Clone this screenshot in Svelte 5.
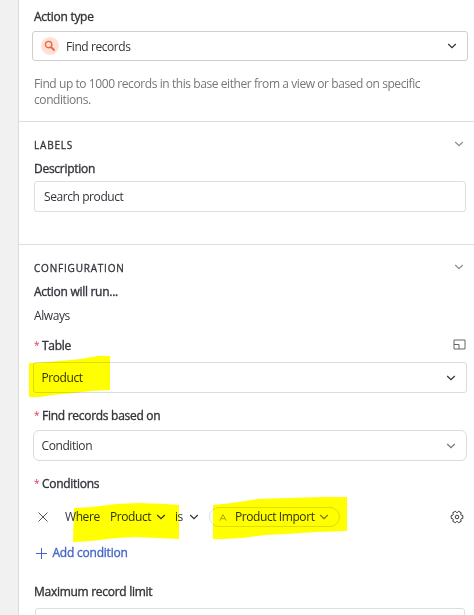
<script lang="ts">
	let actionType = $state('Find records');
	let description = $state('Search product');
	let table = $state('Product');
	let basedOn = $state('Condition');

	// outline of a six-toothed cog centred on 7,7
	const cog = Array.from({ length: 6 }, (_, i) => i * 60)
		.flatMap((a) => [
			[a - 24, 4.5],
			[a - 15, 6],
			[a + 15, 6],
			[a + 24, 4.5]
		])
		.map(([deg, r]) => {
			const rad = (deg * Math.PI) / 180;
			return `${(7 + r * Math.cos(rad)).toFixed(2)},${(7 + r * Math.sin(rad)).toFixed(2)}`;
		})
		.join(' ');
</script>

{#snippet chevron(tone: string)}
	<svg class="chevron {tone}" width="10" height="6" viewBox="0 0 10 6" aria-hidden="true">
		<path d="M1.2 1 5 4.6 8.8 1" />
	</svg>
{/snippet}

<div class="page">
	<aside class="gutter"></aside>
	<main class="panel">
		<section class="action">
			<h3 class="label">Action type</h3>
			<button class="select select-action">
				<span class="badge">
					<svg width="12" height="12" viewBox="0 0 12 12" aria-hidden="true">
						<circle cx="4.6" cy="4.6" r="3.2" />
						<path d="m7 7 3.5 3.5" />
					</svg>
				</span>
				<span class="value">{actionType}</span>
				{@render chevron('dark')}
			</button>
			<p class="help">
				Find up to 1000 records in this base either from a view or based on specific<br />
				conditions.
			</p>
		</section>

		<section class="labels">
			<header class="heading">
				<h2>LABELS</h2>
				{@render chevron('muted')}
			</header>
			<h3 class="label description-label">Description</h3>
			<div class="input"><span>{description}</span></div>
		</section>

		<section class="config">
			<header class="heading">
				<h2>CONFIGURATION</h2>
				{@render chevron('muted')}
			</header>
			<h3 class="label run-label">Action will run...</h3>
			<p class="always">Always</p>

			<div class="field-label table-label">
				<span class="star">*</span>
				<h3 class="label">Table</h3>
				<svg class="expand" width="13" height="11" viewBox="0 0 13 11" aria-hidden="true">
					<path d="M1 1h11v9H1zM1 5.5h5V10" />
				</svg>
			</div>
			<button class="select table-select">
				<span class="value">{table}</span>
				{@render chevron('dark')}
			</button>

			<div class="field-label based-label">
				<span class="star">*</span>
				<h3 class="label">Find records based on</h3>
			</div>
			<button class="select based-select">
				<span class="value">{basedOn}</span>
				{@render chevron('grey')}
			</button>

			<div class="field-label conditions-label">
				<span class="star">*</span>
				<h3 class="label">Conditions</h3>
			</div>
			<div class="condition-row">
				<svg class="close" width="10" height="10" viewBox="0 0 10 10" aria-hidden="true">
					<path d="m.5.5 9 9m0-9-9 9" />
				</svg>
				<span class="where">Where</span>
				<span class="column">Product</span>
				{@render chevron('dark')}
				<span class="operator">is</span>
				{@render chevron('dark')}
				<span class="token">
					<svg class="letter" width="8" height="7" viewBox="0 0 8 7" aria-hidden="true">
						<path d="M.7 6.7 4 .6l3.3 6.1M1.9 4.7h4.2" />
					</svg>
					<span class="token-text">Product Import</span>
					{@render chevron('grey')}
				</span>
				<svg class="gear" width="14" height="14" viewBox="0 0 14 14" aria-hidden="true">
					<polygon points={cog} />
					<circle cx="7" cy="7" r="1.8" />
				</svg>
			</div>
			<button class="add">
				<svg width="11" height="11" viewBox="0 0 11 11" aria-hidden="true">
					<path d="M5.5 0v11M0 5.5h11" />
				</svg>
				<span>Add condition</span>
			</button>
			<h3 class="label max-label">Maximum record limit</h3>
			<div class="input limit"></div>
		</section>
	</main>

	<!-- marker strokes drawn over the form -->
	<svg class="marker" width="474" height="615" viewBox="0 0 474 615" aria-hidden="true">
		<path d="M29 363h7l24-2 20-2 18-3h12v34l-19 1-17 2-22 2-12 2H29z" />
		<path d="M74 508l18-1 24-3 23-1 26 1 14 1v34l-22-1-20-1-21 1-25 3-17 1h-1z" />
		<path d="M213 505l19-2 25-4 30-1 36-1h24v34l-30 1-31 2-21 1-24 3-16 1h-12z" />
	</svg>
</div>

<style>
	:global(body) {
		overflow: hidden;
	}

	.page {
		position: relative;
		display: flex;
		width: 474px;
		height: 615px;
		overflow: hidden;
		background: #fff;
		color: #32343a;
		font: 12px/16px 'Open Sans', 'Noto Sans', sans-serif;
		letter-spacing: -0.42px;
	}

	.gutter {
		box-sizing: border-box;
		width: 19px;
		flex-shrink: 0;
		background: #f1f1f1;
		border-right: 1px solid #dcdcdc;
	}

	.panel {
		flex: 1;
		min-width: 0;
	}

	section {
		box-sizing: border-box;
		padding-left: 15px;
	}

	h2,
	h3,
	p {
		margin: 0;
	}

	span,
	h2,
	h3,
	p {
		white-space: nowrap;
	}

	button {
		font: inherit;
		letter-spacing: inherit;
		color: inherit;
		text-align: left;
	}

	svg {
		display: block;
		flex-shrink: 0;
		fill: none;
		stroke: currentColor;
	}

	.action {
		height: 122px;
		padding-top: 9px;
		border-bottom: 1px solid #ddd;
	}

	.labels {
		height: 123px;
		padding-top: 15px;
		border-bottom: 1px solid #ddd;
	}

	.config {
		padding-top: 15px;
	}

	.label {
		font-size: 12px;
		font-weight: 400;
		line-height: 16px;
		letter-spacing: -0.28px;
		-webkit-text-stroke: 0.35px currentColor;
	}

	.select {
		box-sizing: border-box;
		display: flex;
		align-items: center;
		width: 434px;
		height: 31px;
		margin-left: -1px;
		padding: 0 10px 0 7.5px;
		background: #fff;
		border: 1px solid #dcdcdc;
		border-radius: 3px;
	}

	.value {
		flex: 1;
	}

	.select-action {
		width: 436px;
		height: 30px;
		margin: 6px 0 0 -2px;
		padding-left: 7px;
		border-color: #cecece;
	}

	.select-action .value {
		padding-top: 1px;
	}

	.badge {
		display: grid;
		place-items: center;
		width: 18px;
		height: 18px;
		margin: 0 7px 0 1px;
		border-radius: 50%;
		background: #ffe0d5;
		color: #e5683d;
	}

	.badge svg {
		stroke-width: 1.4;
	}

	.badge path {
		stroke-width: 1.8;
	}

	.chevron {
		stroke-width: 1.2;
		color: #303238;
	}

	.chevron.muted {
		color: #8d8d8d;
	}

	.chevron.grey {
		color: #777;
	}

	.help {
		margin-top: 15px;
		color: #777;
	}

	.heading {
		display: flex;
		justify-content: space-between;
		height: 16px;
		padding-right: 10px;
	}

	.heading .chevron {
		margin-top: 4px;
	}

	h2 {
		font-size: 10px;
		font-weight: 400;
		line-height: 16px;
		letter-spacing: 0.8px;
		-webkit-text-stroke: 0.3px currentColor;
	}

	.description-label {
		margin-top: 8px;
	}

	.input {
		box-sizing: border-box;
		display: flex;
		align-items: center;
		width: 432px;
		height: 31px;
		margin-top: 4px;
		padding-left: 9px;
		border: 1px solid #dedede;
		border-radius: 3px;
	}

	.run-label,
	.always {
		margin-top: 8px;
	}

	.field-label {
		display: flex;
		gap: 4px;
		height: 16px;
	}

	.star {
		width: 4px;
		font-size: 10px;
		line-height: 15px;
		color: #dc3658;
	}

	.table-label {
		margin-top: 14px;
	}

	.expand {
		margin: 1px 8px 0 auto;
		color: #666;
	}

	.table-select {
		margin-top: 8px;
	}

	.based-label {
		margin-top: 15px;
	}

	.based-select {
		margin-top: 6px;
		border-radius: 6px;
	}

	.conditions-label {
		margin-top: 15px;
	}

	.condition-row {
		display: flex;
		align-items: center;
		height: 20px;
		margin-top: 15px;
		padding: 0 10px 0 4px;
	}

	.close {
		color: #555;
	}

	.where {
		width: 45px;
		margin-left: 17px;
	}

	.column {
		width: 46px;
	}

	.operator {
		width: 14px;
		margin-left: 9px;
	}

	.token {
		box-sizing: border-box;
		display: flex;
		align-items: center;
		width: 131px;
		height: 20px;
		margin-left: 10px;
		padding-left: 9px;
		border: 1px solid #dedede;
		border-radius: 10px;
	}

	.letter {
		color: #aaa;
	}

	.token-text {
		width: 84px;
		margin-left: 8px;
	}

	.gear {
		margin-left: auto;
		color: #35373b;
		stroke-linejoin: round;
	}

	.add {
		display: flex;
		align-items: center;
		gap: 6px;
		height: 16px;
		margin-top: 18px;
		padding: 0 0 0 1.5px;
		border: 0;
		background: none;
		color: #4666c7;
		letter-spacing: -0.22px;
	}

	.add span {
		-webkit-text-stroke: 0.35px currentColor;
	}

	.max-label {
		margin-top: 23px;
	}

	.limit {
		width: 430px;
		margin: 8px 0 0 1px;
	}

	.marker {
		position: absolute;
		inset: 0;
		pointer-events: none;
		mix-blend-mode: multiply;
		fill: #ff0;
		stroke: none;
	}
</style>
